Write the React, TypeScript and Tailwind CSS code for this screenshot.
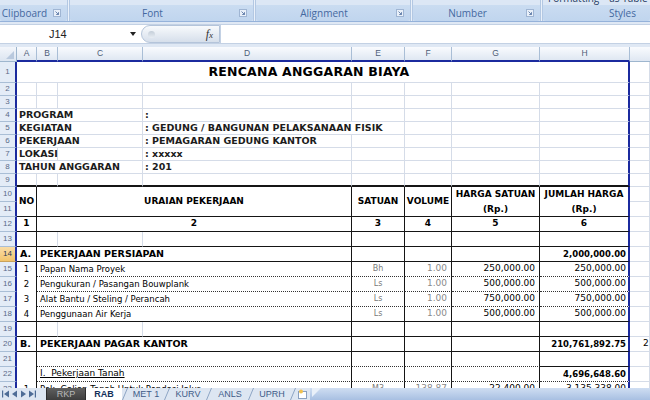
import React from "react";

type R = "g" | "k" | "n" | "x";
type B = "g" | "k" | "d" | "t" | "x";

const RB: Record<R, string> = {
  g: "border-r border-r-[#d5dce8]",
  k: "border-r border-r-[#151515]",
  n: "border-r-2 border-r-[#1b2a9e]",
  x: "",
};

const BB: Record<B, string> = {
  g: "border-b border-b-[#d5dce8]",
  k: "border-b border-b-[#151515]",
  d: "border-b border-b-[#333] [border-bottom-style:dotted]",
  t: "border-b-2 border-b-[#151515]",
  x: "",
};

function X({
  r = "g",
  b = "g",
  className = "",
  children,
}: {
  r?: R;
  b?: B;
  className?: string;
  children?: React.ReactNode;
}) {
  return <div className={`flex items-center whitespace-nowrap ${RB[r]} ${BB[b]} ${className}`}>{children}</div>;
}

function RowNo({ n, active = false }: { n: number; active?: boolean }) {
  return (
    <div
      className={
        active
          ? "flex items-center justify-center font-['Liberation_Sans',sans-serif] text-[8px] text-[#2b3a55] bg-linear-to-b from-[#f9dca6] to-[#f2c46b] border-b border-b-[#c9a25a] border-r-2 border-r-[#1b2a9e]"
          : "flex items-center justify-center font-['Liberation_Sans',sans-serif] text-[8px] text-[#5b6b88] bg-[#e4ecf7] border-b border-b-[#a9bed6] border-r-2 border-r-[#1b2a9e]"
      }
    >
      {n}
    </div>
  );
}

function Plain({ n }: { n: number }) {
  return (
    <>
      <RowNo n={n} />
      <X />
      <X />
      <X />
      <X />
      <X />
      <X />
      <X />
      <X r="n" />
      <X />
    </>
  );
}

function Info({ n, label, value, short = false, wide = false }: { n: number; label: string; value: string; short?: boolean; wide?: boolean }) {
  return (
    <>
      <RowNo n={n} />
      {short ? (
        <>
          <X className="col-span-2 pl-[2px] font-bold text-[9.5px] text-[#1c1c1c]">{label}</X>
          <X />
        </>
      ) : (
        <X className="col-span-3 pl-[2px] font-bold text-[9.5px] text-[#1c1c1c]">{label}</X>
      )}
      <X className={wide ? "col-span-2 pl-[2px] font-bold text-[9.5px] text-[#1c1c1c]" : "pl-[2px] font-bold text-[9.5px] text-[#1c1c1c]"}>
        {value}
      </X>
      {!wide && <X />}
      <X />
      <X />
      <X r="n" />
      <X />
    </>
  );
}

const items = [
  ["1", "Papan Nama Proyek", "Bh", "1.00", "250,000.00", "250,000.00"],
  ["2", "Pengukuran / Pasangan Bouwplank", "Ls", "1.00", "500,000.00", "500,000.00"],
  ["3", "Alat Bantu / Steling / Perancah", "Ls", "1.00", "750,000.00", "750,000.00"],
  ["4", "Penggunaan Air Kerja", "Ls", "1.00", "500,000.00", "500,000.00"],
];

function Sheet() {
  const cols = ["A", "B", "C", "D", "E", "F", "G", "H"];
  return (
    <div className="grid grid-cols-[17px_20px_21px_85px_209px_53px_47px_88px_90px_20px] grid-rows-[15px_21px_repeat(8,13px)_repeat(14,15px)] bg-white font-['DejaVu_Sans',sans-serif] text-black">
      {/* column headers */}
      <div className="flex items-end justify-end bg-linear-to-b from-[#f3f6fb] to-[#dce5f1] border-r border-r-[#9eb6ce] border-b border-b-[#9eb6ce] p-[2px]">
        <svg width="8" height="8" viewBox="0 0 8 8">
          <polygon points="8,0 8,8 0,8" fill="#b9c9de" />
        </svg>
      </div>
      {cols.map((c) => (
        <div
          key={c}
          className="flex items-center justify-center font-['Liberation_Sans',sans-serif] text-[8.5px] text-[#4e5d77] bg-linear-to-b from-[#f9fbfe] to-[#dfe7f2] border-r border-r-[#a9bed6] border-b-2 border-b-[#1b2a9e]"
        >
          {c}
        </div>
      ))}
      <div className="bg-linear-to-b from-[#f9fbfe] to-[#dfe7f2] border-b border-b-[#9eb6ce]" />

      {/* row 1 */}
      <RowNo n={1} />
      <X r="n" className="col-span-8 justify-center pr-[27px] text-[12.5px] font-bold tracking-[0.2px]">
        RENCANA ANGGARAN BIAYA
      </X>
      <X />

      <Plain n={2} />
      <Plain n={3} />
      <Info n={4} label="PROGRAM" value=":" />
      <Info n={5} label="KEGIATAN" value=": GEDUNG / BANGUNAN PELAKSANAAN FISIK" wide />
      <Info n={6} label="PEKERJAAN" value=": PEMAGARAN GEDUNG KANTOR" />
      <Info n={7} label="LOKASI" value=": xxxxx" short />
      <Info n={8} label="TAHUN ANGGARAN" value=": 201" />

      {/* row 9 */}
      <RowNo n={9} />
      <X b="t" />
      <X b="t" />
      <X b="t" />
      <X b="t" />
      <X b="t" />
      <X b="t" />
      <X b="t" />
      <X r="n" b="t" />
      <X />

      {/* rows 10-11 table head */}
      <RowNo n={10} />
      <X r="k" b="k" className="row-span-2 justify-center font-bold text-[9px]">NO</X>
      <X r="k" b="k" className="col-span-3 row-span-2 justify-center font-bold text-[9px]">URAIAN PEKERJAAN</X>
      <X r="k" b="k" className="row-span-2 justify-center font-bold text-[9px]">SATUAN</X>
      <X r="k" b="k" className="row-span-2 justify-center font-bold text-[9px]">VOLUME</X>
      <X r="k" b="k" className="row-span-2 flex-col justify-center font-bold text-[9px] leading-[15px]">
        <span>HARGA SATUAN</span>
        <span>(Rp.)</span>
      </X>
      <X r="n" b="k" className="row-span-2 flex-col justify-center font-bold text-[9px] leading-[15px]">
        <span>JUMLAH HARGA</span>
        <span>(Rp.)</span>
      </X>
      <X />
      <RowNo n={11} />
      <X />

      {/* row 12 */}
      <RowNo n={12} />
      <X r="k" b="k" className="justify-center font-bold text-[9px]">1</X>
      <X r="k" b="k" className="col-span-3 justify-center font-bold text-[9px]">2</X>
      <X r="k" b="k" className="justify-center font-bold text-[9px]">3</X>
      <X r="k" b="k" className="justify-center font-bold text-[9px]">4</X>
      <X r="k" b="k" className="justify-center font-bold text-[9px]">5</X>
      <X r="n" b="k" className="justify-center font-bold text-[9px]">6</X>
      <X />

      {/* row 13 */}
      <RowNo n={13} />
      <X r="k" b="k" />
      <X r="g" b="k" />
      <X r="g" b="k" />
      <X r="k" b="k" />
      <X r="k" b="k" />
      <X r="k" b="k" />
      <X r="k" b="k" />
      <X r="n" b="k" />
      <X />

      {/* row 14 */}
      <RowNo n={14} active />
      <X r="k" b="k" className="pl-[3px] font-bold text-[9.5px]">A.</X>
      <X r="k" b="k" className="col-span-3 pl-[3px] font-bold text-[9.5px]">PEKERJAAN PERSIAPAN</X>
      <X r="k" b="k" />
      <X r="k" b="k" />
      <X r="k" b="k" />
      <X r="n" b="k" className="justify-end pr-[2px] font-bold text-[8.5px]">2,000,000.00</X>
      <X />

      {/* rows 15-18 */}
      {items.map((it, i) => {
        const last = i === items.length - 1;
        return (
          <React.Fragment key={it[0]}>
            <RowNo n={15 + i} />
            <X r="k" b={last ? "k" : "x"} className="justify-center text-[8.5px]">{it[0]}</X>
            <X r="k" b={last ? "k" : "d"} className="col-span-3 pl-[3px] text-[8.5px]">{it[1]}</X>
            <X r="k" b={last ? "k" : "d"} className="justify-center text-[8px] text-[#7a7a7a]">{it[2]}</X>
            <X r="k" b={last ? "k" : "d"} className="justify-end pr-[4px] text-[9px] text-[#8a8a8a]">{it[3]}</X>
            <X r="k" b={last ? "k" : "d"} className="justify-end pr-[4px] text-[9px]">{it[4]}</X>
            <X r="n" b={last ? "k" : "d"} className="justify-end pr-[2px] text-[9px]">{it[5]}</X>
            <X />
          </React.Fragment>
        );
      })}

      {/* row 19 */}
      <RowNo n={19} />
      <X r="k" b="k" />
      <X r="g" b="k" />
      <X r="g" b="k" />
      <X r="k" b="k" />
      <X r="k" b="k" />
      <X r="k" b="k" />
      <X r="k" b="k" />
      <X r="n" b="k" />
      <X />

      {/* row 20 */}
      <RowNo n={20} />
      <X r="k" b="k" className="pl-[3px] font-bold text-[9.5px]">B.</X>
      <X r="k" b="k" className="col-span-3 pl-[3px] font-bold text-[9.5px]">PEKERJAAN PAGAR KANTOR</X>
      <X r="k" b="k" />
      <X r="k" b="k" />
      <X r="k" b="k" />
      <X r="n" b="k" className="justify-end pr-[2px] font-bold text-[8.5px]">210,761,892.75</X>
      <X className="pl-[13px] text-[9px] overflow-hidden">2</X>

      {/* row 21 */}
      <RowNo n={21} />
      <X r="k" b="x" />
      <X r="k" b="d" className="col-span-3" />
      <X r="k" b="d" />
      <X r="k" b="d" />
      <X r="k" b="d" />
      <X r="n" b="k" />
      <X />

      {/* row 22 */}
      <RowNo n={22} />
      <X r="k" b="x" />
      <X r="k" b="d" className="col-span-3 pl-[3px] text-[9px] underline">I.&nbsp;&nbsp;Pekerjaan Tanah</X>
      <X r="k" b="d" />
      <X r="k" b="d" />
      <X r="k" b="d" />
      <X r="n" b="d" className="justify-end pr-[2px] font-bold text-[8.5px]">4,696,648.60</X>
      <X />

      {/* row 23 */}
      <RowNo n={23} />
      <X r="k" b="d" className="justify-center text-[8.5px]">1</X>
      <X r="k" b="d" className="col-span-3 pl-[3px] text-[8.5px]">Pek. Galian Tanah Untuk Pondasi Jalur</X>
      <X r="k" b="d" className="justify-center text-[8px] text-[#7a7a7a]">M3</X>
      <X r="k" b="d" className="justify-end pr-[4px] text-[9px] text-[#8a8a8a]">138.87</X>
      <X r="k" b="d" className="justify-end pr-[4px] text-[9px]">22,400.00</X>
      <X r="n" b="d" className="justify-end pr-[2px] text-[9px]">3,135,338.00</X>
      <X />
    </div>
  );
}

function Launcher() {
  return (
    <svg width="8" height="8" viewBox="0 0 8 8" className="shrink-0 mr-[6px]">
      <rect x="0.5" y="0.5" width="7" height="7" fill="#e9f0f9" stroke="#9fb5d3" />
      <path d="M2.5 2.5 L5.5 5.5 M5.5 3.2 V5.5 H3.2" stroke="#5c79a6" fill="none" strokeWidth="0.9" />
    </svg>
  );
}

function Group({ className, label, launcher = true, children }: { className: string; label: string; launcher?: boolean; children?: React.ReactNode }) {
  return (
    <div className={`flex flex-col h-full ${className}`}>
      <div className="h-[5px] overflow-hidden bg-[#dce7f5]">{children}</div>
      <div className="flex-1 flex items-center bg-linear-to-b from-[#cadcf1] to-[#c0d5ee] rounded-b-[3px]">
        {launcher ? (
          <>
            <span className="flex-1 text-center pr-[4px]">{label}</span>
            <Launcher />
          </>
        ) : (
          <span className="pl-[66px]">{label}</span>
        )}
      </div>
    </div>
  );
}

function Sep() {
  return <div className="w-[3px] h-full border-x border-[#b3c8e3] bg-[#eaf1fa]" />;
}

function Ribbon() {
  return (
    <div className="h-[22px] flex bg-[#d2e0f1] border-b border-b-[#95b2da] font-['Open_Sans',sans-serif] text-[10px] text-[#44689f]">
      <Group className="w-[67px]" label="Clipboard" />
      <Sep />
      <Group className="w-[183px]" label="Font" />
      <Sep />
      <Group className="w-[154px]" label="Alignment" />
      <Sep />
      <Group className="w-[127px]" label="Number" />
      <Sep />
      <Group className="flex-1" label="Styles" launcher={false}>
        <div className="flex gap-[10px] pl-[5px] -mt-[8px] text-[10px] leading-[12px] text-[#1e3a60]">
          <span>Formatting</span>
          <span>as Table</span>
        </div>
      </Group>
    </div>
  );
}

function FormulaBar() {
  return (
    <div className="h-[25px] pt-[2px] pb-[3px] bg-[#dfe8f4]">
      <div className="h-[20px] flex bg-white border-y border-[#c3d1e4] font-['Liberation_Sans',sans-serif]">
        <div className="w-[141px] flex items-center pl-[49px] pr-[5px] text-[11px] text-[#222]">
          <span>J14</span>
          <svg width="6" height="4" viewBox="0 0 6 4" className="ml-auto">
            <polygon points="0,0 6,0 3,4" fill="#222" />
          </svg>
        </div>
        <div className="w-[79px] flex items-center justify-between rounded-l-full bg-linear-to-b from-[#f8fafc] to-[#d6dfeb] border border-[#b4c4da] pl-[6px] pr-[6px]">
          <div className="w-[7px] h-[7px] rounded-full bg-linear-to-b from-[#c4ced9] to-[#e8edf3]" />
          <span className="italic font-['Liberation_Serif',serif] text-[12px] text-[#333] leading-none">
            f<span className="text-[9px]">x</span>
          </span>
        </div>
        <div className="flex-1 border-l border-[#c3d1e4]" />
      </div>
    </div>
  );
}

function Nav({ dir, bar }: { dir: "l" | "r"; bar?: boolean }) {
  return (
    <svg width="9" height="8" viewBox="0 0 9 8">
      {dir === "l" ? <polygon points={bar ? "3,4 8,0.5 8,7.5" : "2,4 7,0.5 7,7.5"} fill="#4e6c96" /> : <polygon points={bar ? "6,4 1,0.5 1,7.5" : "7,4 2,0.5 2,7.5"} fill="#4e6c96" />}
      {bar && (dir === "l" ? <rect x="1" y="0.5" width="1.2" height="7" fill="#4e6c96" /> : <rect x="6.8" y="0.5" width="1.2" height="7" fill="#4e6c96" />)}
    </svg>
  );
}

function Slash() {
  return (
    <svg width="6" height="12" viewBox="0 0 6 12" className="shrink-0">
      <path d="M0.5 12 L5.5 0" stroke="#8ea5c4" strokeWidth="1" />
    </svg>
  );
}

function TabBar() {
  const tabs = ["MET 1", "KURV", "ANLS", "UPRH"];
  return (
    <div className="h-[12px] flex font-['Liberation_Sans',sans-serif] text-[9px] leading-none">
      <div className="w-[46px] flex items-center pl-[1px] bg-[#dde6f2]">
        <Nav dir="l" bar />
        <Nav dir="l" />
        <Nav dir="r" />
        <Nav dir="r" bar />
      </div>
      <div className="w-[40px] flex items-center justify-center bg-linear-to-b from-[#5f5f5f] to-[#3e3e3e] text-[#b9b9b9] border-x border-[#2d2d2d]">RKP</div>
      <div className="w-[36px] flex items-center justify-center bg-white font-bold text-[#15315a]">RAB</div>
      {tabs.map((t) => (
        <div key={t} className="w-[42px] flex items-center bg-[#dde6f2] text-[#3f5c88]">
          <Slash />
          <span className="flex-1 text-center">{t}</span>
        </div>
      ))}
      <div className="w-[20px] flex items-center bg-[#dde6f2]">
        <Slash />
        <svg width="11" height="10" viewBox="0 0 11 10" className="ml-[1px]">
          <rect x="1.5" y="2.5" width="8" height="7" fill="#fff" stroke="#8aa0bf" />
          <circle cx="4" cy="2.5" r="2" fill="#f2c14e" />
        </svg>
      </div>
      <div className="flex-1 flex items-center bg-linear-to-b from-[#cfdef2] to-[#a8c0e2]">
        <svg width="10" height="12" viewBox="0 0 10 12" className="ml-[2px]">
          <polygon points="0,0 9,0 0,9" fill="#e9f0f9" />
        </svg>
      </div>
    </div>
  );
}

export default function App() {
  return (
    <div className="w-[650px] h-[400px] flex flex-col overflow-hidden bg-white">
      <Ribbon />
      <FormulaBar />
      <div className="flex-1 overflow-hidden">
        <Sheet />
      </div>
      <TabBar />
    </div>
  );
}
